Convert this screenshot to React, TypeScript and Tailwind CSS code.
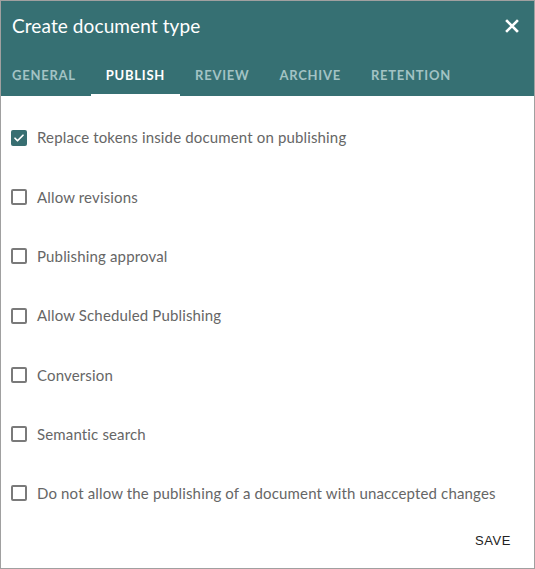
import React from "react";

const tabs = ["GENERAL", "PUBLISH", "REVIEW", "ARCHIVE", "RETENTION"];
const items = [
  { label: "Replace tokens inside document on publishing", checked: true },
  { label: "Allow revisions", checked: false },
  { label: "Publishing approval", checked: false },
  { label: "Allow Scheduled Publishing", checked: false },
  { label: "Conversion", checked: false },
  { label: "Semantic search", checked: false },
  { label: "Do not allow the publishing of a document with unaccepted changes", checked: false },
];

function Box({ checked }: { checked: boolean }) {
  if (checked) {
    return (
      <div className="w-[16px] h-[16px] rounded-[2px] bg-[#376e71] flex items-center justify-center shrink-0">
        <svg width="12" height="12" viewBox="0 0 24 24" fill="none" stroke="white" strokeWidth="3.5" strokeLinecap="round" strokeLinejoin="round">
          <path d="M4 12.5l5 5L20 6.5" />
        </svg>
      </div>
    );
  }
  return <div className="w-[16px] h-[16px] rounded-[2px] border-2 border-[#7a7a7a] shrink-0" />;
}

export default function App() {
  return (
    <div className="w-[535px] h-[569px] border border-[#a0a0a0] bg-white flex flex-col" style={{ fontFamily: "Lato, 'Open Sans', sans-serif" }}>
      <div className="bg-[#367073] h-[95px] flex flex-col">
        <div className="flex items-center justify-between pl-[11px] pr-[15px] h-[49px]">
          <div className="text-white text-[19px] leading-none tracking-[0.1px]">Create document type</div>
          <svg width="14" height="14" viewBox="0 0 14 14" stroke="white" strokeWidth="2.6" strokeLinecap="square">
            <path d="M2 2L12 12M12 2L2 12" />
          </svg>
        </div>
        <div className="flex mt-auto">
          {tabs.map((t, i) => (
            <div
              key={t}
              className={`h-[38px] pr-[15px] flex items-center justify-center text-[13px] font-bold tracking-[0.75px] border-b-2 ${
                i === 0 ? "pl-[11px]" : "pl-[15px]"
              } ${t === "PUBLISH" ? "text-white border-white" : "text-[#a3c3c4] border-transparent"}`}
            >
              {t}
            </div>
          ))}
        </div>
      </div>
      <div className="flex flex-col pt-[12px] pl-[10px]">
        {items.map((it) => (
          <div key={it.label} className="h-[59.3px] flex items-center gap-[10px]">
            <Box checked={it.checked} />
            <span className="text-[15px] tracking-[0.15px] text-[#666666]">{it.label}</span>
          </div>
        ))}
      </div>
      <div className="flex justify-end pr-[23px] pt-[8px]">
        <span className="text-[13px] tracking-[0.6px] text-[#222]" style={{ fontFamily: "'Liberation Sans', Arial, sans-serif" }}>SAVE</span>
      </div>
    </div>
  );
}
